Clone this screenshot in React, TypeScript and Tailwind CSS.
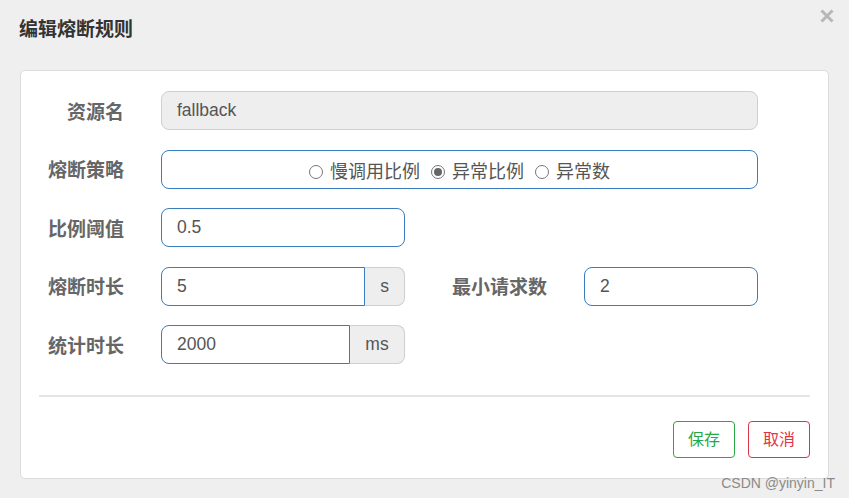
import React from "react";

const font = { fontFamily: '"Liberation Sans", "Noto Sans CJK SC", sans-serif' };

const Label = ({ children }: { children: React.ReactNode }) => (
  <div className="w-[103px] shrink-0 pt-[3px] text-right text-[19px] font-bold text-[#666] leading-none">
    {children}
  </div>
);

const Radio = ({ checked, label }: { checked?: boolean; label: string }) => (
  <label className="flex items-center gap-[7px]">
    <span className="flex h-[14px] w-[14px] items-center justify-center rounded-full border border-[#777] bg-white">
      {checked && <span className="h-[8px] w-[8px] rounded-full bg-[#666]" />}
    </span>
    <span>{label}</span>
  </label>
);

const App = () => {
  return (
    <div className="relative h-[498px] w-[849px] overflow-hidden bg-[#efefef] text-[#555]" style={font}>
      <div className="flex h-[70px] items-start justify-between">
        <h1 className="pl-[19px] pt-[19px] text-[19px] font-bold leading-[22px] text-[#333]">编辑熔断规则</h1>
        <button className="mr-[15px] mt-[9px]" aria-label="close">
          <svg width="14" height="14" viewBox="0 0 14 14" className="block">
            <path d="M1.5 1.5 L12.5 12.5 M12.5 1.5 L1.5 12.5" stroke="#b8b8b8" strokeWidth="3" strokeLinecap="butt" />
          </svg>
        </button>
      </div>

      <div className="ml-[20px] h-[409px] w-[809px] rounded-[5px] border border-[#dcdcdc] bg-white">
        <div className="flex flex-col gap-[19.5px] pt-[20px]">
          <div className="flex h-[39px] items-center gap-[37px]">
            <Label>资源名</Label>
            <div className="flex h-[39px] w-[597px] items-center rounded-[8px] border border-[#cfcfcf] bg-[#eeeeee] pl-[15px] text-[17.5px]">
              fallback
            </div>
          </div>

          <div className="flex h-[39px] items-center gap-[37px]">
            <Label>熔断策略</Label>
            <div className="flex h-[39px] w-[597px] items-center justify-center gap-[11px] rounded-[8px] border border-[#3a7cc0] pt-[6px] text-[18px]">
              <Radio label="慢调用比例" />
              <Radio checked label="异常比例" />
              <Radio label="异常数" />
            </div>
          </div>

          <div className="flex h-[39px] items-center gap-[37px]">
            <Label>比例阈值</Label>
            <div className="flex h-[39px] w-[244px] items-center rounded-[8px] border border-[#3a7cc0] pl-[15px] text-[17.5px]">
              0.5
            </div>
          </div>

          <div className="flex h-[39px] items-center gap-[37px]">
            <Label>熔断时长</Label>
            <div className="flex h-[39px] w-[244px]">
              <div className="flex flex-1 items-center rounded-l-[8px] border border-[#3a7cc0] pl-[15px] text-[17.5px]">5</div>
              <div className="flex w-[40px] items-center justify-center rounded-r-[8px] border border-l-0 border-[#cfcfcf] bg-[#eeeeee] text-[17.5px]">
                s
              </div>
            </div>
            <div className="ml-[10px] w-[96px] pt-[3px] text-[19px] font-bold leading-none text-[#666]">最小请求数</div>
            <div className="ml-[-1px] flex h-[39px] w-[174px] items-center rounded-[8px] border border-[#3a7cc0] pl-[15px] text-[17.5px]">
              2
            </div>
          </div>

          <div className="flex h-[39px] items-center gap-[37px]">
            <Label>统计时长</Label>
            <div className="flex h-[39px] w-[244px]">
              <div className="flex flex-1 items-center rounded-l-[8px] border border-[#3a7cc0] pl-[15px] text-[17.5px]">2000</div>
              <div className="flex w-[55px] items-center justify-center rounded-r-[8px] border border-l-0 border-[#cfcfcf] bg-[#eeeeee] text-[17.5px]">
                ms
              </div>
            </div>
          </div>
        </div>

        <div className="mx-[18px] mt-[31px] h-[2px] bg-[#e5e5e5]" />

        <div className="mr-[18px] mt-[24px] flex justify-end gap-[13px]">
          <button className="h-[37px] w-[62px] rounded-[4px] border border-[#28a745] text-[16px] text-[#28a745]">保存</button>
          <button className="h-[37px] w-[62px] rounded-[4px] border border-[#dc3545] text-[16px] text-[#dc3545]">取消</button>
        </div>
      </div>

      <div className="absolute bottom-[8px] right-[14px] text-[14px] leading-none text-[#8a8a8a]">CSDN @yinyin_IT</div>
    </div>
  );
};

export default App;
